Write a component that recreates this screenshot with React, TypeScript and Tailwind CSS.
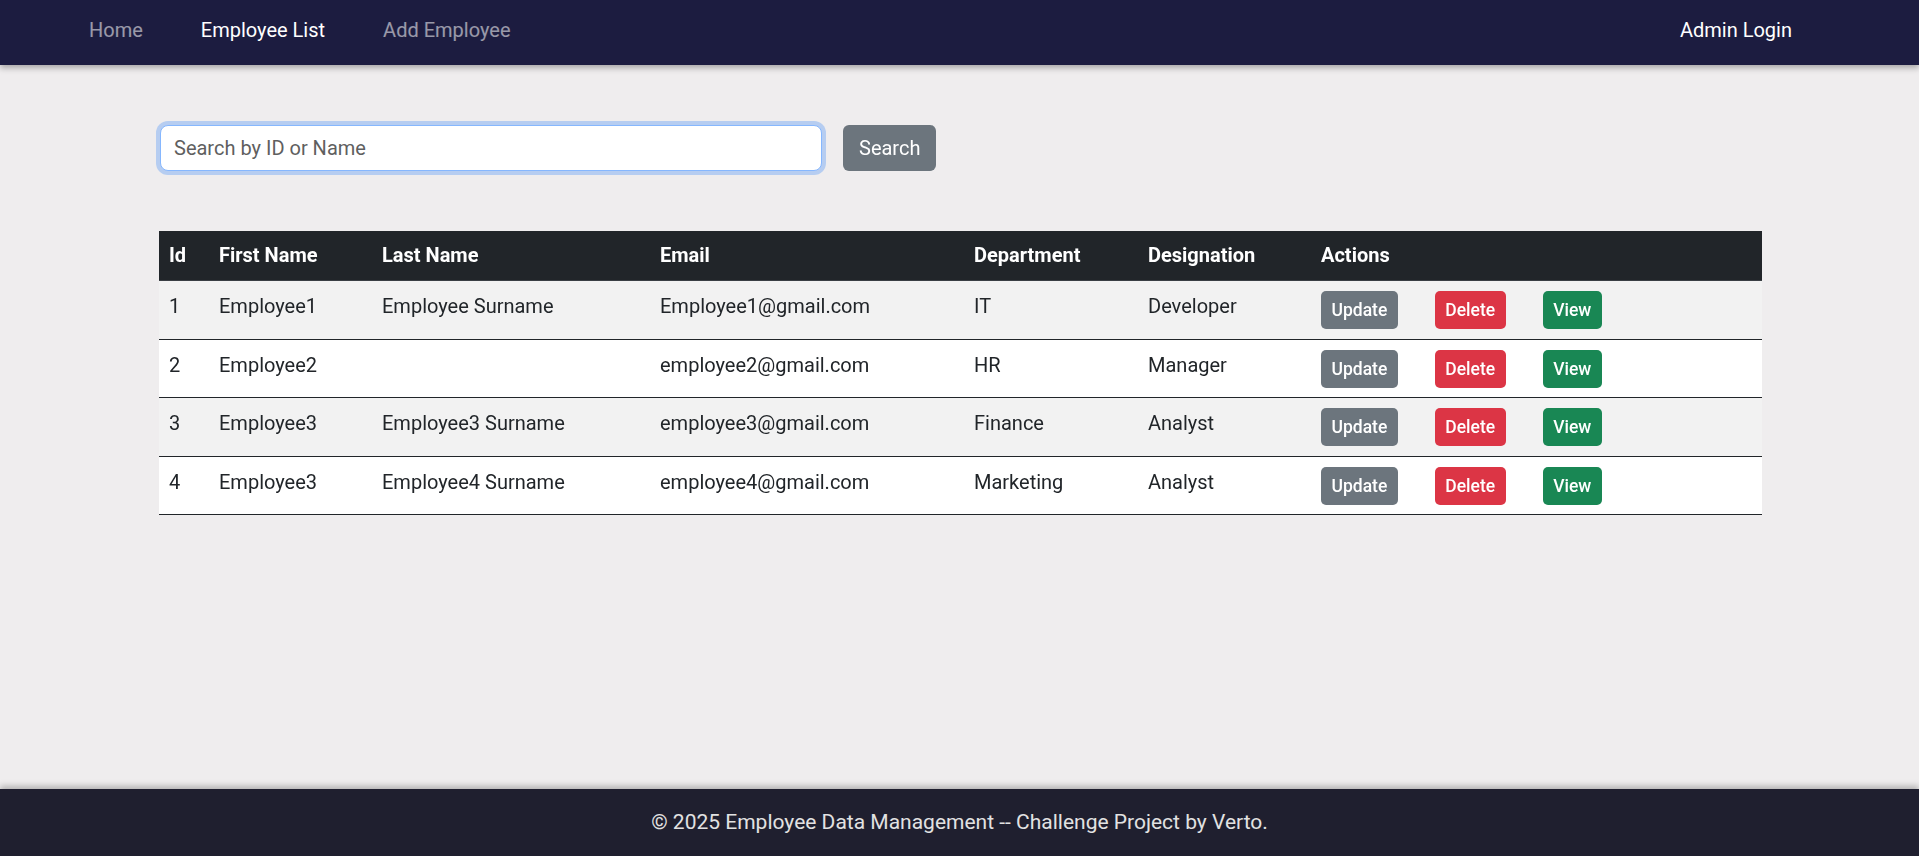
import { useState } from 'react';

type Employee = {
    id: number;
    firstName: string;
    lastName: string;
    email: string;
    department: string;
    designation: string;
};

const employees: Employee[] = [
    { id: 1, firstName: 'Employee1', lastName: 'Employee Surname', email: 'Employee1@gmail.com', department: 'IT', designation: 'Developer' },
    { id: 2, firstName: 'Employee2', lastName: '', email: 'employee2@gmail.com', department: 'HR', designation: 'Manager' },
    { id: 3, firstName: 'Employee3', lastName: 'Employee3 Surname', email: 'employee3@gmail.com', department: 'Finance', designation: 'Analyst' },
    { id: 4, firstName: 'Employee3', lastName: 'Employee4 Surname', email: 'employee4@gmail.com', department: 'Marketing', designation: 'Analyst' },
];

function Navbar() {
    return (
        <nav className="relative z-10 h-[65px] shrink-0 bg-[#1c1c40] shadow-[0_3px_6px_rgba(0,0,0,0.3)] flex items-center justify-between pl-[89px] pr-[127px] pb-[5px] text-[20px]">
            <div className="flex items-center gap-[58px]">
                <a className="text-white/55">Home</a>
                <a className="text-white">Employee List</a>
                <a className="text-white/55">Add Employee</a>
            </div>
            <a className="text-white">Admin Login</a>
        </nav>
    );
}

function ActionButtons() {
    return (
        <div className="flex items-center gap-[37px]">
            <button className="h-[38px] px-[10.5px] rounded-[5px] bg-[#6c757d] text-white text-[17.5px] font-medium">Update</button>
            <button className="h-[38px] px-[10.5px] rounded-[5px] bg-[#dc3545] text-white text-[17.5px] font-medium">Delete</button>
            <button className="h-[38px] px-[10.5px] rounded-[5px] bg-[#198754] text-white text-[17.5px] font-medium">View</button>
        </div>
    );
}

export default function App() {
    const [query, setQuery] = useState('');

    return (
        <div className="h-[856px] flex flex-col bg-[#efedee] text-[#212529] overflow-hidden" style={{ fontFamily: 'Roboto, "Noto Sans", sans-serif' }}>
            <Navbar />

            <main className="flex-1 pl-[159px] pt-[60px]">
                <div className="flex items-center ml-px">
                    <input
                        autoFocus
                        value={query}
                        onChange={(e) => setQuery(e.target.value)}
                        placeholder="Search by ID or Name"
                        className="w-[662px] h-[46px] pl-[13px] pr-[15px] rounded-[8px] bg-white border border-[#86b7fe] shadow-[0_0_0_4px_rgba(13,110,253,0.25)] outline-none text-[20px] placeholder:text-[#5f5f5f]"
                    />
                    <button className="ml-[21px] h-[46px] px-[16px] rounded-[6px] bg-[#6c757d] text-white text-[20px]">Search</button>
                </div>

                <table className="mt-[60px] w-[1603px] border-collapse text-[20px] leading-[30px]">
                    <thead>
                        <tr className="bg-[#212529] text-white text-left border-b border-[#3a3f44]">
                            <th className="w-[50px] px-[10px] pt-[9px] pb-[10px] font-bold">Id</th>
                            <th className="w-[163px] px-[10px] pt-[9px] pb-[10px] font-bold">First Name</th>
                            <th className="w-[278px] px-[10px] pt-[9px] pb-[10px] font-bold">Last Name</th>
                            <th className="w-[314px] px-[10px] pt-[9px] pb-[10px] font-bold">Email</th>
                            <th className="w-[174px] px-[10px] pt-[9px] pb-[10px] font-bold">Department</th>
                            <th className="w-[173px] px-[10px] pt-[9px] pb-[10px] font-bold">Designation</th>
                            <th className="px-[10px] pt-[9px] pb-[10px] font-bold">Actions</th>
                        </tr>
                    </thead>
                    <tbody>
                        {employees.map((emp, i) => (
                            <tr key={emp.id} className={`${i % 2 === 0 ? 'bg-[#f2f2f2]' : 'bg-white'} border-b border-[#212529] align-top`}>
                                <td className="px-[10px] pt-[10px] pb-[9.5px]">{emp.id}</td>
                                <td className="px-[10px] pt-[10px] pb-[9.5px]">{emp.firstName}</td>
                                <td className="px-[10px] pt-[10px] pb-[9.5px]">{emp.lastName}</td>
                                <td className="px-[10px] pt-[10px] pb-[9.5px]">{emp.email}</td>
                                <td className="px-[10px] pt-[10px] pb-[9.5px]">{emp.department}</td>
                                <td className="px-[10px] pt-[10px] pb-[9.5px]">{emp.designation}</td>
                                <td className="px-[10px] pt-[10px] pb-[9.5px]">
                                    <ActionButtons />
                                </td>
                            </tr>
                        ))}
                    </tbody>
                </table>
            </main>

            <footer className="relative z-10 h-[67px] shrink-0 bg-[#1f1f2f] shadow-[0_-3px_6px_rgba(0,0,0,0.25)] flex items-center justify-center text-[21px] text-[#e2e2e2]">
                © 2025 Employee Data Management -- Challenge Project by Verto.
            </footer>
        </div>
    );
}
